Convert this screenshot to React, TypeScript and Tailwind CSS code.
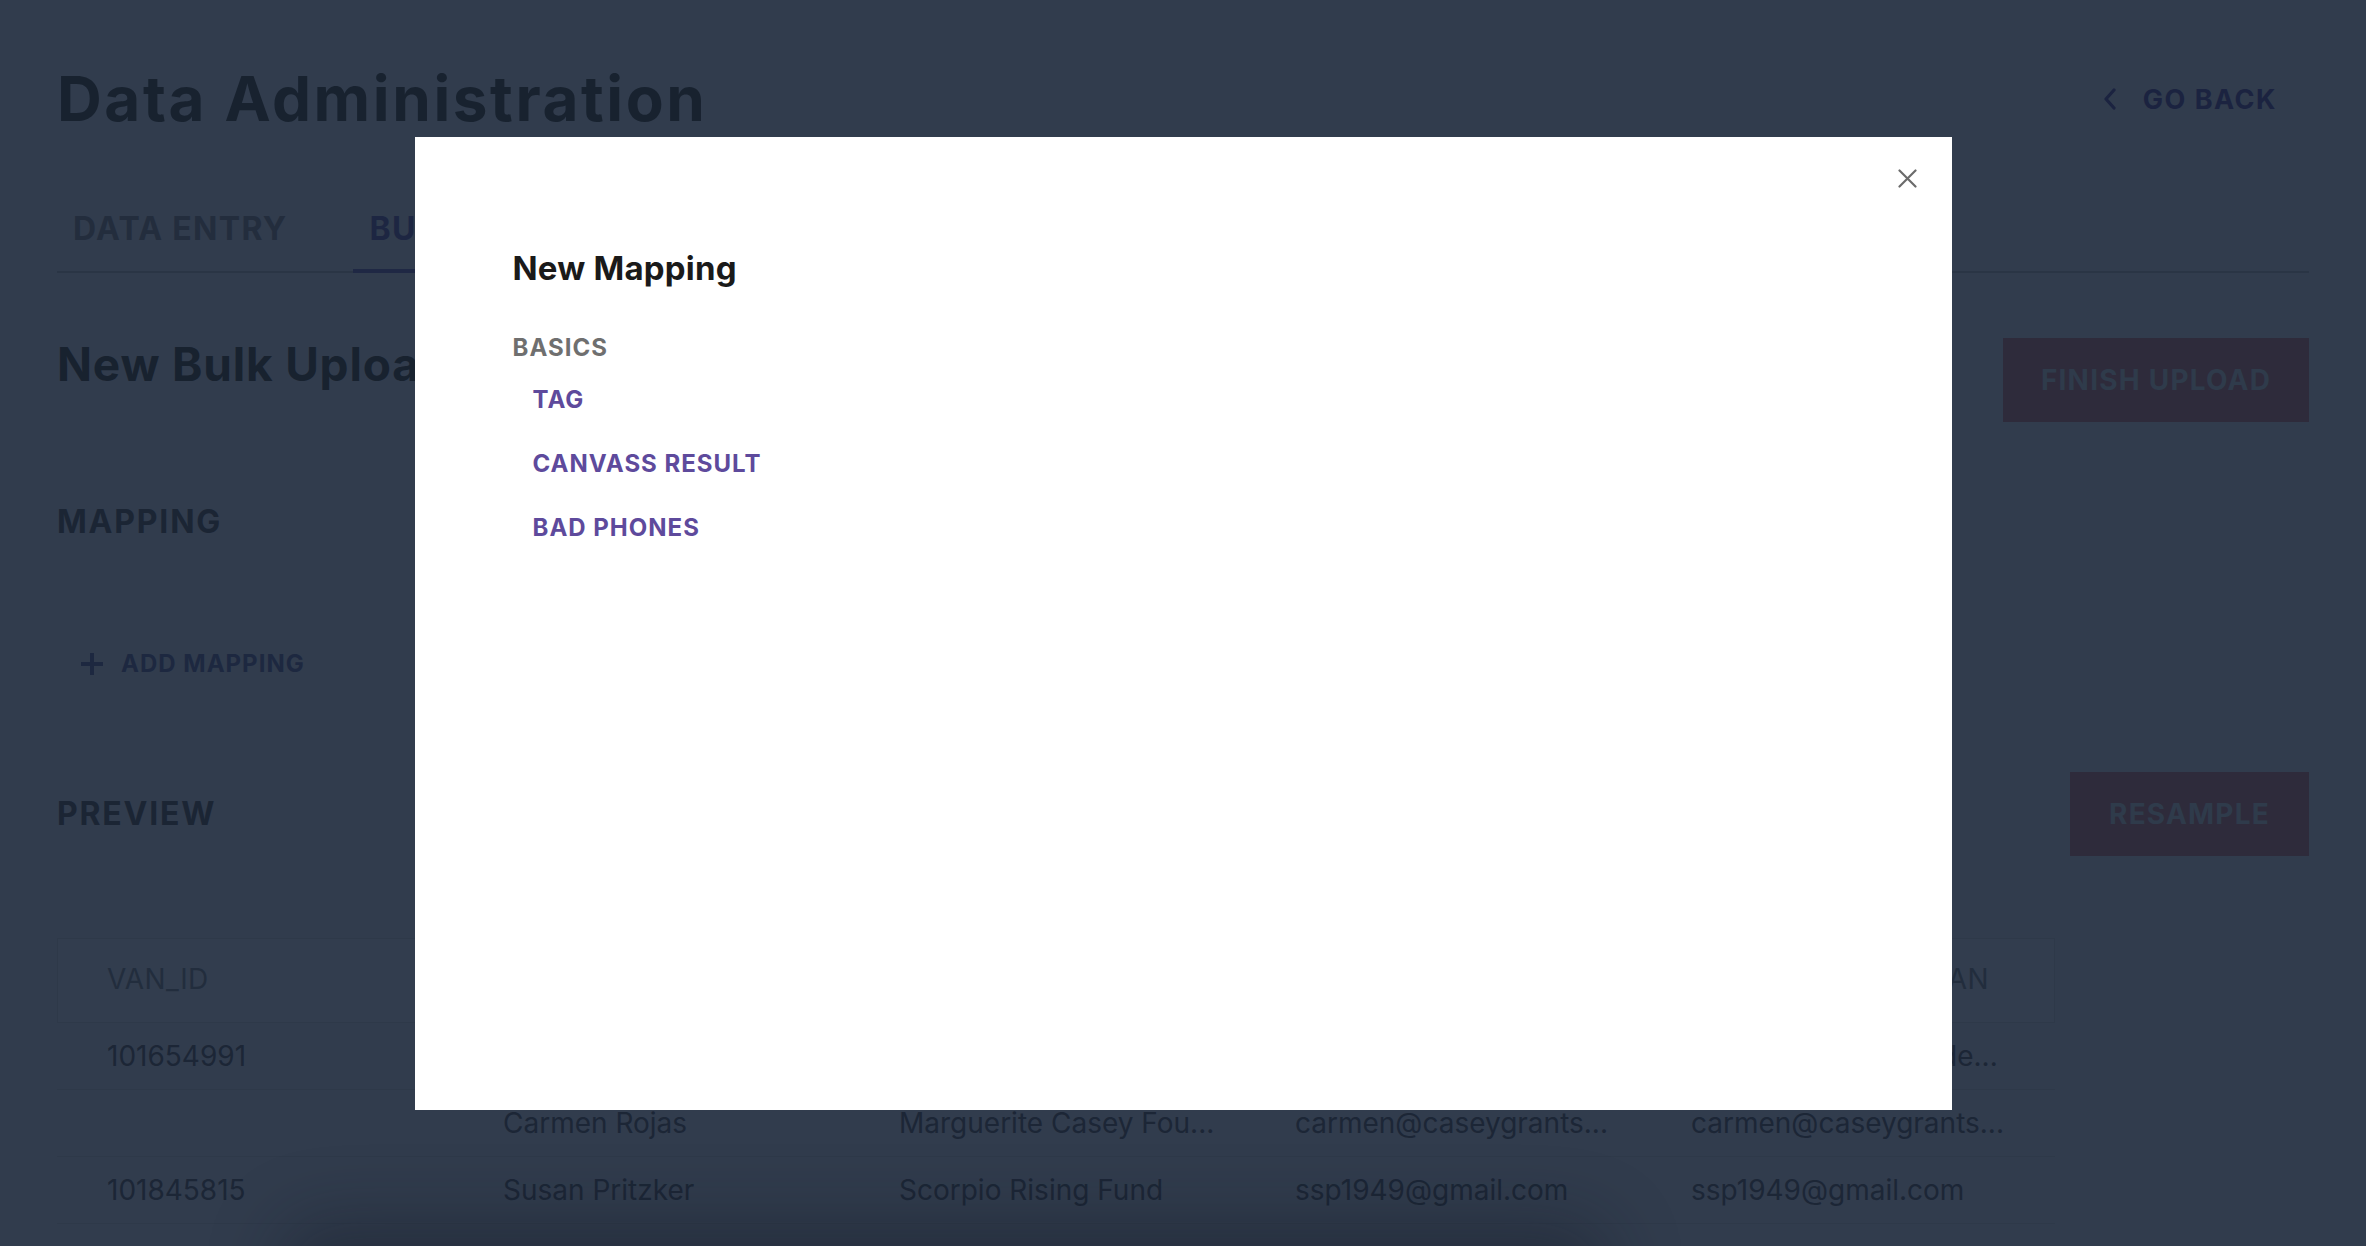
import React from "react";

const columns = ["VAN_ID", "NAME", "ORGANIZATION", "EMAIL", "PRIMARY_EMAIL_VAN"];

const rows = [
  ["101654991", "Jane Stevens", "Ford Foundation", "jstevens@fordfound...", "jstevens@fordfounde..."],
  ["", "Carmen Rojas", "Marguerite Casey Fou...", "carmen@caseygrants...", "carmen@caseygrants..."],
  ["101845815", "Susan Pritzker", "Scorpio Rising Fund", "ssp1949@gmail.com", "ssp1949@gmail.com"],
];

const mappingOptions = ["TAG", "CANVASS RESULT", "BAD PHONES"];

function ChevronLeft() {
  return (
    <svg width="14" height="22" viewBox="0 0 14 22" fill="none">
      <polyline points="11,2 3,11 11,20" stroke="#1b2340" strokeWidth="3.2" strokeLinecap="round" strokeLinejoin="round" />
    </svg>
  );
}

function PlusIcon() {
  return (
    <svg width="24" height="24" viewBox="0 0 24 24" fill="none">
      <path d="M12 1v22M1 12h22" stroke="#1d2840" strokeWidth="4" />
    </svg>
  );
}

function CloseIcon() {
  return (
    <svg width="19" height="19" viewBox="0 0 19 19" fill="none">
      <path d="M1.5 1.5l16 16M17.5 1.5l-16 16" stroke="#6b6b6b" strokeWidth="2.2" strokeLinecap="round" />
    </svg>
  );
}

function PageBehind() {
  return (
    <div className="min-h-[1246px] bg-[#313c4d] px-[57px] overflow-hidden">
      <div className="flex items-center justify-between pt-[68px]">
        <h1 className="text-[62px] leading-none font-bold text-[#18222f] tracking-[2.6px]">Data Administration</h1>
        <button className="flex items-center gap-[26px] pr-[32px] text-[27px] leading-none font-bold text-[#1b2340] tracking-[1.5px]">
          <ChevronLeft />
          GO BACK
        </button>
      </div>

      <div className="mt-[83px] flex gap-[50px] border-b-2 border-[#2a3545]">
        <div className="px-4 pb-[26px] text-[32px] leading-none font-bold text-[#232d3d] tracking-[1.3px]">DATA ENTRY</div>
        <div className="-mb-[2px] border-b-4 border-[#1f2844] px-4 pb-[24px] text-[32px] leading-none font-bold text-[#1d2642] tracking-[1.3px]">
          BULK UPLOAD
        </div>
      </div>

      <div className="mt-[65px] flex items-start justify-between">
        <h2 className="mt-[3px] text-[46px] leading-none font-bold text-[#18222f] tracking-[0.8px]">New Bulk Upload</h2>
        <button className="h-[84px] w-[306px] bg-[#2e2b3b] text-[28px] font-bold text-[#2f3b4b] tracking-[1.2px]">
          FINISH UPLOAD
        </button>
      </div>

      <h3 className="mt-[84px] text-[32px] leading-none font-bold text-[#1b2534] tracking-[1.8px]">MAPPING</h3>

      <button className="mt-[114px] ml-[23px] flex items-center gap-[17px] text-[24px] leading-none font-bold text-[#1d2840] tracking-[1px]">
        <PlusIcon />
        ADD MAPPING
      </button>

      <div className="mt-[96px] flex h-[84px] items-center justify-between">
        <h3 className="text-[32px] leading-none font-bold text-[#1b2534] tracking-[1.8px]">PREVIEW</h3>
        <button className="h-[84px] w-[239px] bg-[#2e2b3b] text-[28px] font-bold text-[#2f3b4b] tracking-[1.2px]">
          RESAMPLE
        </button>
      </div>

      <div className="mt-[82px] w-[1998px] text-[28px] text-[#1c2636]">
        <div className="grid h-[85px] grid-cols-[repeat(5,396px)] items-center border border-[#2e3949] bg-[#323d4e] pb-[4px] text-[#222d3d] tracking-[0.4px]">
          {columns.map((c) => (
            <div key={c} className="truncate pl-[49px]">{c}</div>
          ))}
        </div>
        {rows.map((r, i) => (
          <div key={i} className="grid h-[67px] grid-cols-[repeat(5,396px)] items-center border-b border-[#2e3949]">
            {r.map((cell, j) => (
              <div key={j} className="truncate pl-[50px] pr-[4px]">{cell}</div>
            ))}
          </div>
        ))}
      </div>
    </div>
  );
}

export default function App() {
  return (
    <div className="relative h-[1246px] overflow-hidden font-['Inter',sans-serif]">
      <PageBehind />

      <div className="pointer-events-none fixed left-[320px] top-[1262px] h-[30px] w-[1250px] rounded-full shadow-[0_0_70px_40px_rgba(18,24,34,0.35)]" />

      <div className="fixed inset-0 flex items-center justify-center">
        <div className="relative h-[973px] w-[1537px] bg-white pl-[98px] pt-[115px]">
          <button className="absolute right-[28px] top-[26px] flex h-[32px] w-[32px] items-center justify-center">
            <CloseIcon />
          </button>
          <h2 className="text-[33px] leading-none font-bold text-[#1a1a1a] tracking-[0.2px]">New Mapping</h2>
          <div className="mt-[51px] text-[24px] leading-none font-bold text-[#6f6f6f] tracking-[1px]">BASICS</div>
          <ul className="mt-[28px] flex flex-col gap-[40px] pl-[20px]">
            {mappingOptions.map((o) => (
              <li key={o} className="text-[24px] leading-none font-bold text-[#5e4a9c] tracking-[1px]">{o}</li>
            ))}
          </ul>
        </div>
      </div>
    </div>
  );
}
